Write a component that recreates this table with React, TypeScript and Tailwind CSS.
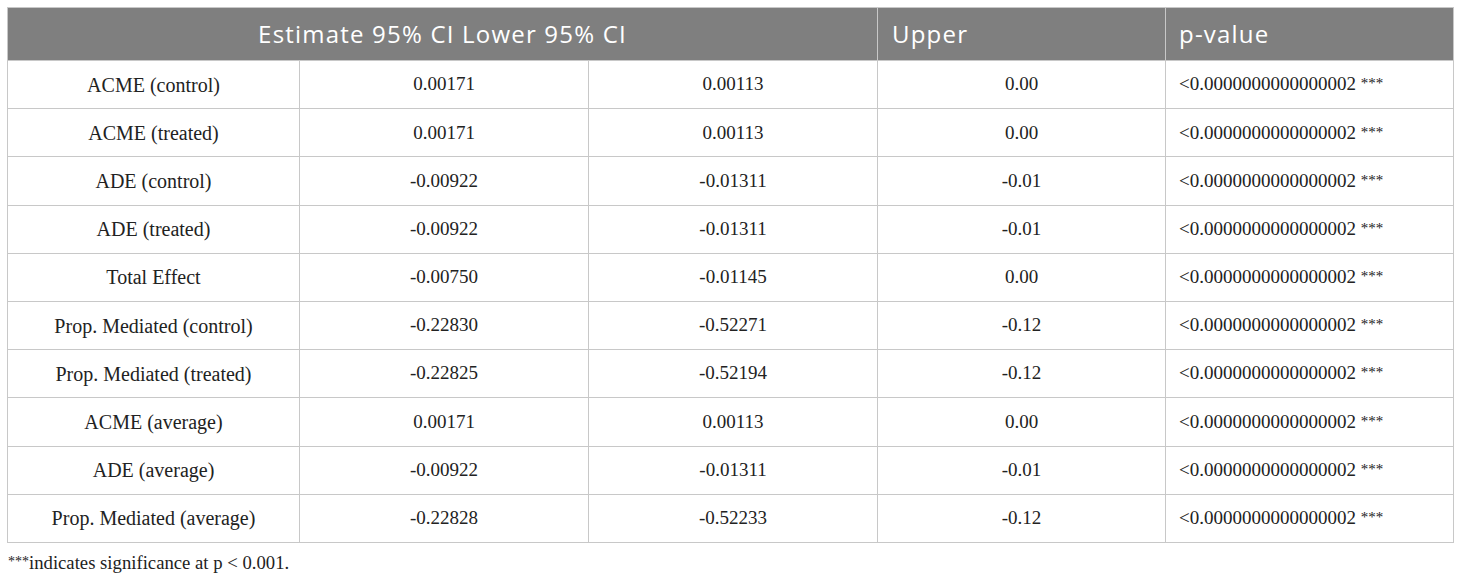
import React from "react";

const rows: [string, string, string, string][] = [
  ["ACME (control)", "0.00171", "0.00113", "0.00"],
  ["ACME (treated)", "0.00171", "0.00113", "0.00"],
  ["ADE (control)", "-0.00922", "-0.01311", "-0.01"],
  ["ADE (treated)", "-0.00922", "-0.01311", "-0.01"],
  ["Total Effect", "-0.00750", "-0.01145", "0.00"],
  ["Prop. Mediated (control)", "-0.22830", "-0.52271", "-0.12"],
  ["Prop. Mediated (treated)", "-0.22825", "-0.52194", "-0.12"],
  ["ACME (average)", "0.00171", "0.00113", "0.00"],
  ["ADE (average)", "-0.00922", "-0.01311", "-0.01"],
  ["Prop. Mediated (average)", "-0.22828", "-0.52233", "-0.12"],
];

export default function App() {
  return (
    <div className="bg-white w-[1460px] h-[580px] pt-[7px] pl-[7px]">
      <table className="border-collapse w-[1446px] table-fixed">
        <colgroup>
          <col className="w-[292px]" />
          <col className="w-[289px]" />
          <col className="w-[289px]" />
          <col className="w-[288px]" />
          <col className="w-[288px]" />
        </colgroup>
        <thead>
          <tr className="h-[53px] bg-[#7f7f7f] text-white text-[24px] tracking-[1.2px] font-['Open_Sans',sans-serif]">
            <th colSpan={3} className="border border-[#c8c8c8] font-normal text-center">
              Estimate 95% CI Lower 95% CI
            </th>
            <th className="border border-[#c8c8c8] font-normal text-left pl-[14px]">Upper</th>
            <th className="border border-[#c8c8c8] font-normal text-left pl-[13px]">p-value</th>
          </tr>
        </thead>
        <tbody className="text-[19px] text-[#222] font-['Liberation_Serif',serif]">
          {rows.map((r, i) => (
            <tr key={i} className="h-[48.2px]">
              <td className="border border-[#c8c8c8] text-center text-[20px]">{r[0]}</td>
              <td className="border border-[#c8c8c8] text-center">{r[1]}</td>
              <td className="border border-[#c8c8c8] text-center">{r[2]}</td>
              <td className="border border-[#c8c8c8] text-center">{r[3]}</td>
              <td className="border border-[#c8c8c8] text-left pl-[13px]">
                {"<0.0000000000000002 "}
                <span className="text-[15px] relative -top-[2px]">***</span>
              </td>
            </tr>
          ))}
        </tbody>
      </table>
      <p className="mt-[6px] pl-[1px] text-[18.7px] leading-normal text-[#222] font-['Liberation_Serif',serif]">
        <span className="text-[14px] relative -top-[3px]">***</span>indicates significance at p &lt; 0.001.
      </p>
    </div>
  );
}
